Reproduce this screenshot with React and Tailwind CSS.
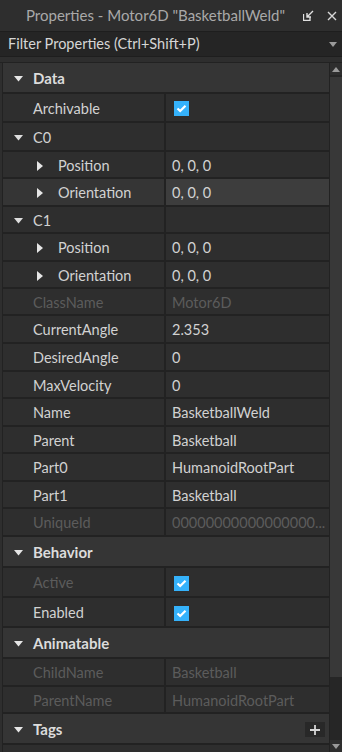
import React from "react";

const FONT = { fontFamily: "Lato, 'Open Sans', sans-serif" };

function Check() {
    return (
        <div className="ml-[2px] w-[15px] h-[15px] bg-[#35b2fb] flex items-center justify-center">
            <svg width="11" height="9" viewBox="0 0 11 9">
                <path d="M1.5 4.5 L4.2 7 L9.5 1.8" fill="none" stroke="#ffffff" strokeWidth="2.2" />
            </svg>
        </div>
    );
}

function TriDown({ color = "#e6e6e6" }) {
    return (
        <svg width="9" height="6" viewBox="0 0 9 6">
            <path d="M0 0 H9 L4.5 5.5 Z" fill={color} />
        </svg>
    );
}

function TriRight() {
    return (
        <svg width="6" height="10" viewBox="0 0 6 10">
            <path d="M0 0 L6 5 L0 10 Z" fill="#e6e6e6" />
        </svg>
    );
}

function Section({ title, h, plus }) {
    return (
        <div className={`flex items-center pt-[2px] bg-[#353535] border-b-2 border-[#222222] ${h}`}>
            <div className="w-[30px] flex justify-center pl-[1px]">
                <TriDown />
            </div>
            <span className="text-[15px] font-bold text-[#dcdcdc]">{title}</span>
            {plus && (
                <div className="ml-auto mr-[4px] w-[20px] h-[15px] bg-[#282828] flex items-center justify-center">
                    <svg width="10" height="10" viewBox="0 0 10 10">
                        <path d="M5 0 V10 M0 5 H10" stroke="#d6d6d6" strokeWidth="1.8" />
                    </svg>
                </div>
            )}
        </div>
    );
}

function Row({ name, value, h = "h-[27px]", kind, dim, hover, check }) {
    const nameColor = dim ? "text-[#5c5c5c]" : "text-[#d2d2d2]";
    return (
        <div className={`flex border-b-2 border-[#222222] ${h}`}>
            <div className={`w-[163px] flex items-center pt-[2px] border-r-2 border-[#222222] ${hover ? "bg-[#353535]" : ""}`}>
                {kind === "group" && (
                    <div className="w-[30px] flex justify-center pl-[1px]">
                        <TriDown color="#dedede" />
                    </div>
                )}
                {kind === "sub" && (
                    <div className="w-[55px] flex justify-end pr-[15px]">
                        <TriRight />
                    </div>
                )}
                {!kind && <div className="w-[30px]" />}
                <span className={`text-[14.5px] ${nameColor}`}>{name}</span>
            </div>
            <div className={`flex-1 flex items-center pt-[2px] pl-[6px] overflow-hidden ${hover ? "bg-[#3d3d3d]" : ""}`}>
                {check ? (
                    <Check />
                ) : (
                    <span className={`text-[14.5px] whitespace-nowrap ${nameColor}`}>{value}</span>
                )}
            </div>
        </div>
    );
}

export default function App() {
    return (
        <div className="w-[342px] h-[752px] bg-[#2e2e2e] overflow-hidden flex flex-col" style={FONT}>
            {/* Title bar */}
            <div className="h-[31px] flex items-center bg-[#2e2e2e]">
                <span className="pl-[26px] text-[15px] text-[#a9a9a9] whitespace-nowrap">
                    Properties - Motor6D "BasketballWeld"
                </span>
                <div className="ml-auto flex items-center gap-[13px] pr-[5px]">
                    <svg width="11" height="11" viewBox="0 0 11 11">
                        <path d="M0.5 4 V10.5 H7 V7" fill="none" stroke="#e0e0e0" strokeWidth="1.3" />
                        <path d="M10 1 L4.5 6.5 M4 3 V7 H8" fill="none" stroke="#e0e0e0" strokeWidth="1.4" />
                    </svg>
                    <svg width="10" height="10" viewBox="0 0 10 10">
                        <path d="M1 1 L9 9 M9 1 L1 9" stroke="#d8d8d8" strokeWidth="1.4" />
                    </svg>
                </div>
            </div>

            {/* Filter */}
            <div className="h-[26px] flex items-center bg-[#252525] border-y border-[#1e1e1e] pl-[8px] pr-[5px]">
                <span className="text-[14.5px] text-[#d6d6d6]">Filter Properties (Ctrl+Shift+P)</span>
                <svg className="ml-auto" width="8" height="5" viewBox="0 0 8 5">
                    <path d="M0 0 H8 L4 5 Z" fill="#9a9a9a" />
                </svg>
            </div>

            <div className="h-[6px] bg-[#2e2e2e] border-b border-[#222222]" />

            {/* Body */}
            <div className="flex flex-1 min-h-0">
                <div className="w-[327px] ml-[2px] border-l border-[#222222] flex flex-col">
                    <Section title="Data" h="h-[31px]" />
                    <Row name="Archivable" check h="h-[29px]" />
                    <Row name="C0" kind="group" h="h-[29px]" />
                    <Row name="Position" value="0, 0, 0" kind="sub" h="h-[27px]" />
                    <Row name="Orientation" value="0, 0, 0" kind="sub" hover h="h-[28px]" />
                    <Row name="C1" kind="group" h="h-[27px]" />
                    <Row name="Position" value="0, 0, 0" kind="sub" h="h-[28px]" />
                    <Row name="Orientation" value="0, 0, 0" kind="sub" h="h-[27px]" />
                    <Row name="ClassName" value="Motor6D" dim h="h-[27px]" />
                    <Row name="CurrentAngle" value="2.353" h="h-[28px]" />
                    <Row name="DesiredAngle" value="0" h="h-[28px]" />
                    <Row name="MaxVelocity" value="0" h="h-[27px]" />
                    <Row name="Name" value="BasketballWeld" h="h-[28px]" />
                    <Row name="Parent" value="Basketball" h="h-[27px]" />
                    <Row name="Part0" value="HumanoidRootPart" h="h-[28px]" />
                    <Row name="Part1" value="Basketball" h="h-[27px]" />
                    <Row name="UniqueId" value="00000000000000000..." dim h="h-[28px]" />
                    <Section title="Behavior" h="h-[31px]" />
                    <Row name="Active" check dim h="h-[30px]" />
                    <Row name="Enabled" check h="h-[30px]" />
                    <Section title="Animatable" h="h-[31px]" />
                    <Row name="ChildName" value="Basketball" dim h="h-[28px]" />
                    <Row name="ParentName" value="HumanoidRootPart" dim h="h-[27px]" />
                    <Section title="Tags" h="h-[31px]" plus />
                    <div className="flex-1 bg-[#2e2e2e]" />
                </div>

                {/* Scrollbar */}
                <div className="flex-1 flex flex-col bg-[#262626] border-l border-[#222222]">
                    <div className="h-[12px] flex items-center justify-center bg-[#2e2e2e]">
                        <svg width="8" height="5" viewBox="0 0 8 5">
                            <path d="M4 0 L8 5 H0 Z" fill="#9a9a9a" />
                        </svg>
                    </div>
                    <div className="h-[600px] mt-[2px] bg-[#383838]" />
                    <div className="flex-1" />
                    <div className="h-[12px] flex items-center justify-center bg-[#2e2e2e]">
                        <svg width="8" height="5" viewBox="0 0 8 5">
                            <path d="M0 0 H8 L4 5 Z" fill="#9a9a9a" />
                        </svg>
                    </div>
                </div>
            </div>
        </div>
    );
}
